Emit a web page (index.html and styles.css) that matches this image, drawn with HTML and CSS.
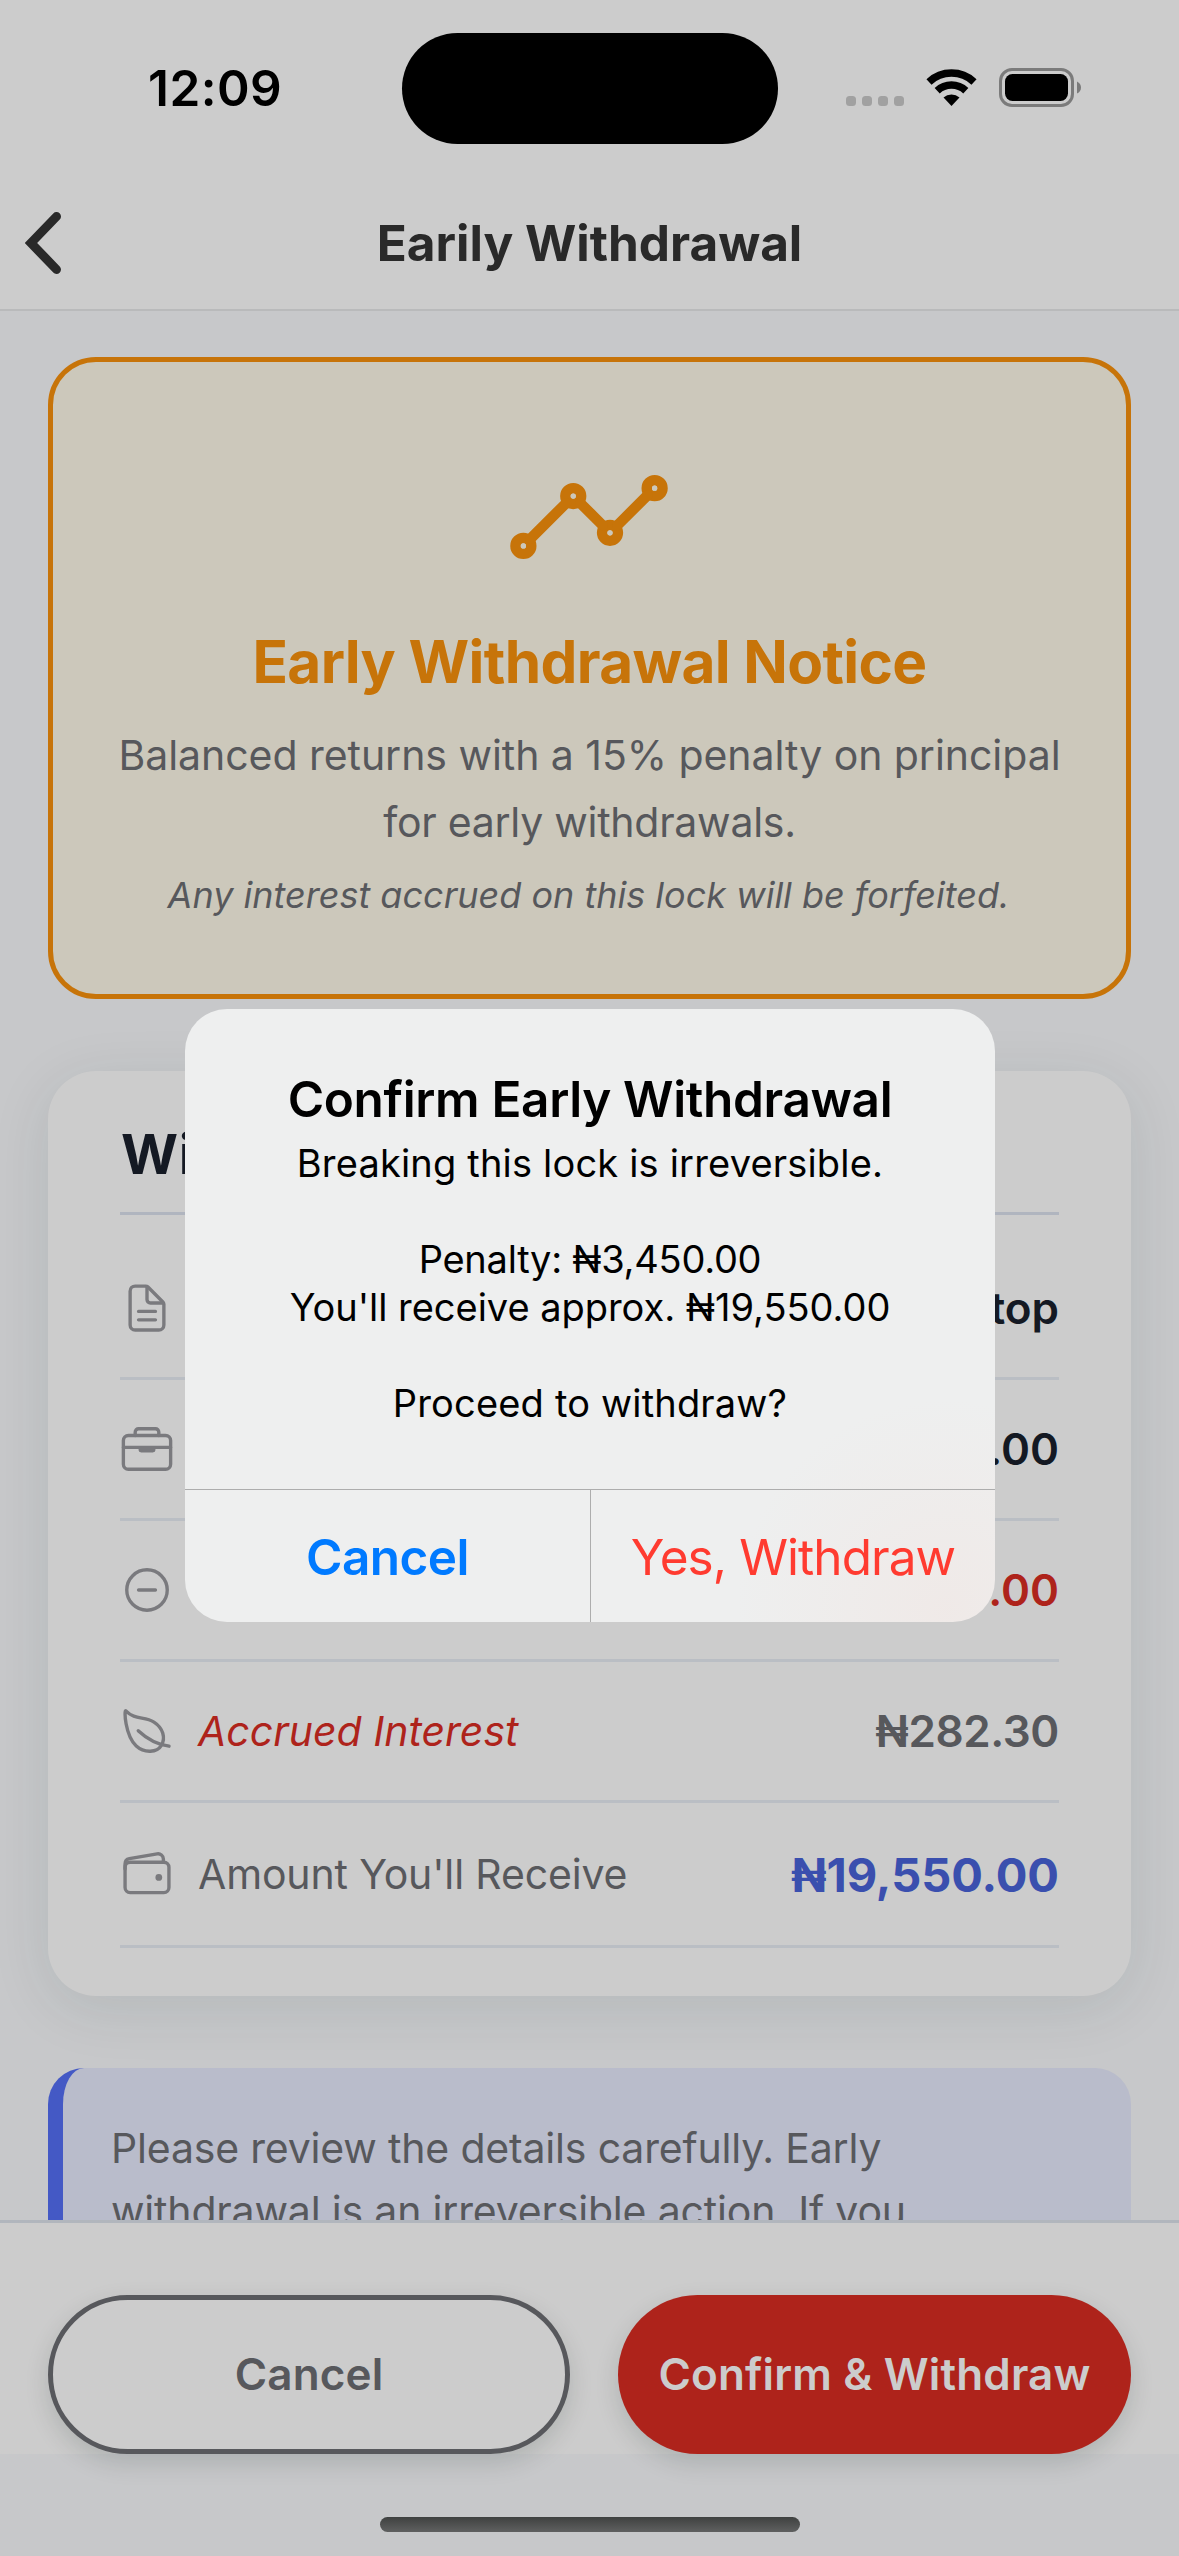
FILE: index.html
```html
<!DOCTYPE html>
<html lang="en">
<head>
<meta charset="utf-8">
<title>Early Withdrawal</title>
<link rel="stylesheet" href="styles.css">
</head>
<body>
<div class="screen">
  <header class="header">
    <div class="status">
      <div class="status-time">12:09</div>
      <div class="island"></div>
      <div class="status-icons">
        <div class="dots"><i></i><i></i><i></i><i></i></div>
        <svg class="wifi" viewBox="0 0 51 37" fill="none" stroke="#000" stroke-width="7.5">
          <path d="M3 12.9A33 33 0 0 1 48 12.9"/>
          <path d="M11.2 21.7A21 21 0 0 1 39.8 21.7"/>
          <path d="M25.5 37L17.5 28.6A12 12 0 0 1 33.5 28.6Z" fill="#000" stroke="none"/>
        </svg>
        <svg class="battery" viewBox="0 0 83 39">
          <rect x="1.5" y="1.5" width="72" height="36" rx="11.5" fill="none" stroke="#7b7b7b" stroke-width="3"/>
          <rect x="6" y="6" width="63" height="27" rx="7.5"/>
          <path d="M78 13.5Q82 15.5 82 19.5T78 25.5Z" fill="#7b7b7b"/>
        </svg>
      </div>
    </div>
    <div class="nav">
      <svg class="back" viewBox="0 0 36 62" fill="none" stroke="#292929" stroke-width="9" stroke-linecap="round" stroke-linejoin="miter"><path d="M31.5 4.5L6 31L31.5 57.5"/></svg>
      <h1 class="nav-title">Earily Withdrawal</h1>
    </div>
  </header>

  <main class="content">
    <section class="notice">
      <svg class="notice-icon" viewBox="0 0 512 512" fill="none" stroke="currentColor" stroke-width="32" stroke-linecap="round" stroke-linejoin="round">
        <circle cx="456" cy="168" r="24"/><circle cx="320" cy="304" r="24"/><circle cx="208" cy="192" r="24"/><circle cx="56" cy="344" r="24"/>
        <circle class="dot" cx="456" cy="168" r="8"/><circle class="dot" cx="320" cy="304" r="8"/><circle class="dot" cx="208" cy="192" r="8"/><circle class="dot" cx="56" cy="344" r="8"/>
        <path d="M433.61 190.39l-91.22 91.22M297.61 281.61l-67.22-67.22M185.61 214.39L78.39 321.61"/>
      </svg>
      <h2 class="notice-title">Early Withdrawal Notice</h2>
      <p class="notice-text"><span>Balanced returns with a 15% penalty on principal</span><br><span class="tight">for early withdrawals.</span></p>
      <p class="notice-note">Any interest accrued on this lock will be forfeited.</p>
    </section>

    <section class="card">
      <h2 class="card-title">Withdrawal Summary</h2>
      <div class="row first">
        <svg class="icon" viewBox="0 0 512 512"><path d="M416 221.25V416a48 48 0 01-48 48H144a48 48 0 01-48-48V96a48 48 0 0148-48h98.75a32 32 0 0122.62 9.37l141.26 141.26a32 32 0 019.37 22.62z"/><path d="M256 56v120a32 32 0 0032 32h120M176 288h160M176 368h160"/></svg>
        <span class="label">Plan</span>
        <span class="value">Laptop</span>
      </div>
      <div class="row">
        <svg class="icon" viewBox="0 0 512 512"><rect x="32" y="128" width="448" height="320" rx="48"/><path d="M144 128V96a32 32 0 0132-32h160a32 32 0 0132 32v32M480 240H32M320 240v24a8 8 0 01-8 8H200a8 8 0 01-8-8v-24"/></svg>
        <span class="label">Principal</span>
        <span class="value">₦23,000.00</span>
      </div>
      <div class="row">
        <svg class="icon" viewBox="0 0 512 512"><path d="M448 256c0-106-86-192-192-192S64 150 64 256s86 192 192 192 192-86 192-192zM336 256H176"/></svg>
        <span class="label">Penalty</span>
        <span class="value red">₦3,450.00</span>
      </div>
      <div class="row">
        <svg class="icon" viewBox="0 0 512 512"><path d="M321.89 171.42C233 114 141 155.22 56 65.22c-19.8-21-8.3 235.5 98.1 332.7 77.79 71 197.9 63.08 238.4-5.92s18.28-163.17-70.61-220.58zM173 253c86 81 175 129 292 147"/></svg>
        <span class="label accrued">Accrued Interest</span>
        <span class="value muted">₦282.30</span>
      </div>
      <div class="row last">
        <svg class="icon" viewBox="0 0 512 512"><rect x="48" y="144" width="416" height="288" rx="48"/><path d="M411.36 144v-30A50 50 0 00352 64.9L88.64 109.85A50 50 0 0048 159v49"/><path class="solid" d="M368 320a32 32 0 1132-32 32 32 0 01-32 32z"/></svg>
        <span class="label">Amount You'll Receive</span>
        <span class="value total">₦19,550.00</span>
      </div>
    </section>

    <section class="info">Please review the details carefully. Early<br>withdrawal is an irreversible action. If you</section>
  </main>

  <footer class="actions">
    <button class="btn outline">Cancel</button>
    <button class="btn danger">Confirm &amp; Withdraw</button>
  </footer>
  <div class="home"><div class="home-bar"></div></div>

  <div class="alert" role="alertdialog">
    <div class="alert-body">
      <h3 class="alert-title">Confirm Early Withdrawal</h3>
      <p class="alert-line wide">Breaking this lock is irreversible.</p>
      <p class="alert-line gap narrow">Penalty: ₦3,450.00</p>
      <p class="alert-line">You'll receive approx. ₦19,550.00</p>
      <p class="alert-line gap wide">Proceed to withdraw?</p>
    </div>
    <div class="alert-actions">
      <button class="alert-btn cancel">Cancel</button>
      <button class="alert-btn confirm">Yes, Withdraw</button>
    </div>
  </div>
</div>
</body>
</html>
```
FILE: styles.css
```css
* { box-sizing: border-box; margin: 0; padding: 0; }

body {
  width: 1179px;
  height: 2556px;
  overflow: hidden;
  font-family: Inter, "Liberation Sans", sans-serif;
}

button { font: inherit; border: 0; background: none; }

.screen {
  position: relative;
  display: flex;
  flex-direction: column;
  width: 1179px;
  height: 2556px;
  overflow: hidden;
  background: #c7c8ca;
}

/* Status bar and navigation */
.header {
  height: 311px;
  flex: none;
  background: #ccc;
  border-bottom: 2px solid #b9babb;
}

.status {
  display: grid;
  grid-template-columns: 402px 376px 401px;
  height: 177px;
  padding-top: 33px;
}

.status-time {
  height: 110px;
  padding-left: 148px;
  font-size: 49.5px;
  font-weight: 600;
  line-height: 110px;
  letter-spacing: .45px;
}

.island { height: 111px; border-radius: 56px; background: #000; }

.status-icons {
  display: flex;
  align-items: flex-end;
  height: 74px;
  padding-left: 68px;
}

.dots { display: flex; gap: 6px; margin-right: 22px; padding-bottom: 1px; }
.dots i { width: 10px; height: 10px; border-radius: 3.5px; background: #a1a1a1; }
.wifi { width: 51px; height: 37px; margin-right: 22px; margin-bottom: 1px; }
.battery { width: 83px; height: 39px; }

.nav {
  display: grid;
  grid-template-columns: 61px 1fr 61px;
  align-items: center;
  height: 132px;
}

.back { width: 36px; height: 62px; margin-left: 25px; }

.nav-title {
  color: #292929;
  font-size: 49.5px;
  font-weight: 700;
  text-align: center;
}

/* Scrolling content */
.content {
  flex: none;
  height: 1909px;
  padding: 46px 48px 0;
  overflow: hidden;
}

.notice {
  display: flex;
  flex-direction: column;
  align-items: center;
  height: 642px;
  padding-top: 71px;
  border: 5px solid #c77409;
  border-radius: 48px;
  background: #ccc8bb;
  color: #57585c;
  text-align: center;
  white-space: nowrap;
}

.notice-icon { width: 168px; height: 168px; margin-right: 2px; margin-bottom: 25px; color: #c77409; }
.notice-icon .dot { fill: #ccc8bb; stroke: none; }

.notice-title {
  margin-bottom: 24px;
  color: #c77409;
  font-size: 58.5px;
  line-height: 72px;
  letter-spacing: -.62px;
}

.notice-text { margin-bottom: 12px; font-size: 41px; line-height: 67px; letter-spacing: -.05px; }
.tight { letter-spacing: -.26px; }

.notice-note {
  margin-right: 2px;
  font-size: 36px;
  font-style: italic;
  line-height: 54px;
}

.card {
  height: 925px;
  margin-top: 72px;
  padding: 49px 72px 0;
  border-radius: 48px;
  background: #ccc;
  box-shadow: 0 12px 60px rgba(20, 50, 45, .1);
}

.card-title {
  height: 95px;
  padding-left: 1px;
  border-bottom: 3px solid #b0b5bf;
  color: #141923;
  font-size: 55px;
  line-height: 68px;
  letter-spacing: .8px;
}

.row {
  display: flex;
  align-items: center;
  height: 141px;
  border-bottom: 3px solid #babec4;
  white-space: nowrap;
}

.first { height: 165px; padding-top: 24px; }
.last { height: 145px; }

.icon {
  width: 54px;
  height: 54px;
  margin-right: 24px;
  fill: none;
  stroke: #7a7a7e;
  stroke-width: 32;
  stroke-linecap: round;
  stroke-linejoin: round;
}

.icon .solid { fill: #7a7a7e; stroke: none; }

.label { flex: 1; color: #57585c; font-size: 41px; letter-spacing: -.15px; }
.accrued { color: #ae231b; font-style: italic; letter-spacing: 0; }
.value { color: #141923; font-size: 44px; font-weight: 600; }
.red { color: #ae231b; }
.muted { color: #57585c; letter-spacing: -.4px; }
.total { color: #3a4fae; font-size: 47px; font-weight: 700; letter-spacing: -.05px; }

.info {
  height: 320px;
  margin-top: 72px;
  padding: 49px 0 0 48px;
  border-left: 15px solid #4459c5;
  border-radius: 36px;
  background: #b9bccb;
  color: #57585c;
  font-size: 41px;
  line-height: 63px;
  letter-spacing: -.18px;
}

/* Bottom actions */
.actions {
  display: grid;
  grid-template-columns: 522px 513px;
  gap: 48px;
  flex: none;
  height: 234px;
  padding: 72px 48px 0;
  border-top: 3px solid #b1b6bd;
  background: #ccc;
}

.btn {
  height: 159px;
  padding-bottom: 2px;
  border-radius: 80px;
  font-size: 44px;
  font-weight: 600;
  letter-spacing: .15px;
  box-shadow: 0 9px 24px rgba(10, 25, 22, .14);
}

.outline { border: 5px solid #57585c; background: #ccc; color: #57585c; }
.danger { background: #ae231b; color: #ccc; }

.home { display: flex; justify-content: center; padding-top: 63px; }

.home-bar {
  width: 420px;
  height: 15px;
  border-radius: 8px;
  background: linear-gradient(#3f4140, #5f6060);
}

/* Confirmation dialog */
.alert {
  position: absolute;
  left: 185px;
  top: 1009px;
  width: 810px;
  height: 613px;
  overflow: hidden;
  border-radius: 42px;
  background:
    radial-gradient(circle at 94% 98%, rgba(241, 228, 224, .5), rgba(241, 228, 224, 0) 210px),
    #eeefef;
  text-align: center;
}

.alert-body { height: 480px; padding-top: 60px; color: #000; }

.alert-title {
  font-size: 49.5px;
  font-weight: 600;
  line-height: 60px;
  letter-spacing: -.35px;
}

.alert-line { font-size: 38px; line-height: 48px; letter-spacing: -.03px; }
.alert-title + .alert-line { margin-top: 10px; }
.alert-line.gap { margin-top: 48px; }
.wide { letter-spacing: .18px; }
.narrow { letter-spacing: -.26px; }

.alert-actions {
  display: grid;
  grid-template-columns: 406px 404px;
  height: 133px;
  border-top: 1px solid #adadad;
}

.alert-btn { font-size: 49.5px; padding-top: 1px; }
.cancel { border-right: 1px solid #adadad; color: #007aff; font-weight: 600; letter-spacing: -.56px; }
.confirm { color: #ff3b30; letter-spacing: -.93px; }
```
